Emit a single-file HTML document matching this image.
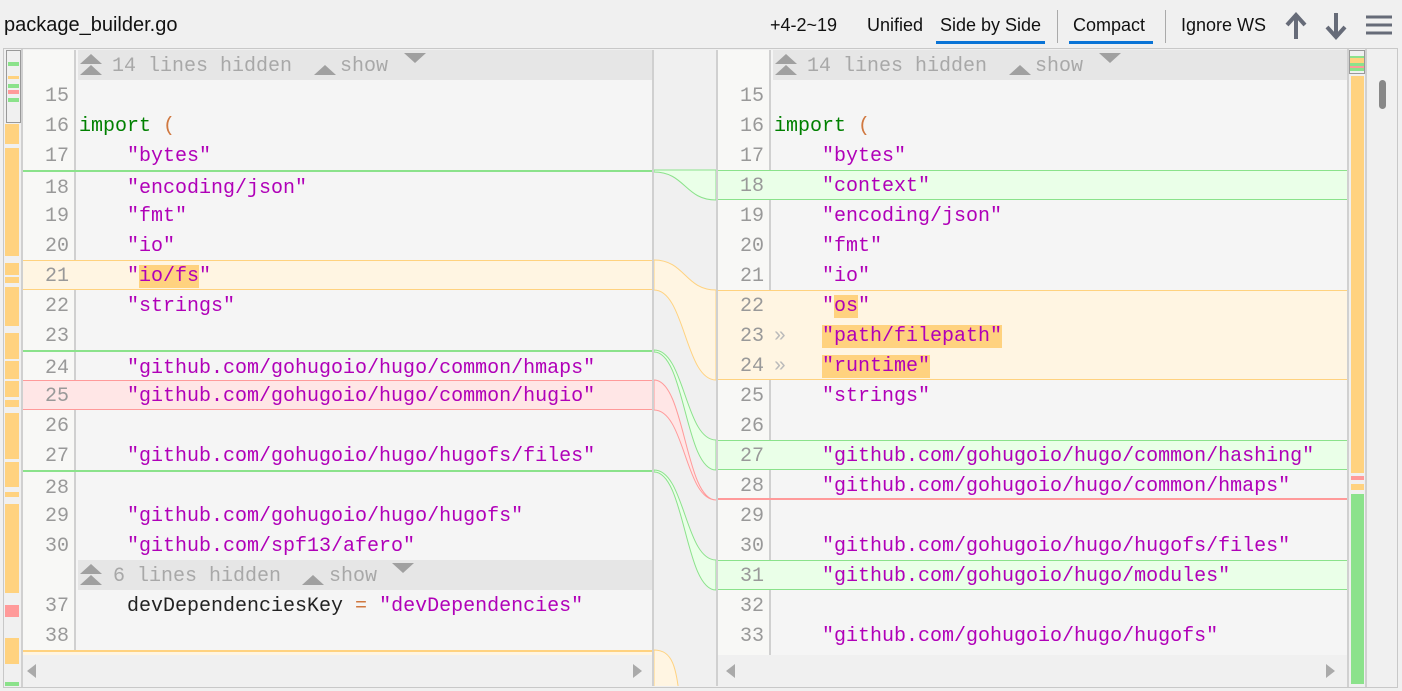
<!DOCTYPE html>
<html><head><meta charset="utf-8"><style>
*{margin:0;padding:0;box-sizing:border-box}
body{width:1402px;height:691px;background:#f0f0f0;position:relative;overflow:hidden;font-family:"Liberation Sans",sans-serif}
.top{position:absolute;font-size:18px;color:#111;top:15px}
.ul{position:absolute;top:41px;height:3px;background:#0a74d6}
.sep{position:absolute;top:10px;width:1px;height:33px;background:#aaa}
.frame{position:absolute;left:3px;top:48px;width:1395px;height:640px;border:1px solid #c8c8c8;background:#f0f0f0}
.panel{position:absolute;top:50px;height:636px;background:#f5f5f5;overflow:hidden;font-family:"Liberation Mono",monospace;font-size:20px}
.gut{position:absolute;top:0;bottom:31px;left:0;width:53px;background:#f8f8f6;border-right:2px solid #d0d0d0}
.r{position:absolute;left:0;right:0;height:30px;line-height:30px;white-space:pre}
.n{position:absolute;left:0;top:2px;width:46px;text-align:right;color:#999}
.c{position:absolute;left:56px;top:2px;color:#222}
.s{color:#b000b8}.k{color:#008000}.p{color:#d07840}
.hl{background:#ffd27f}
.hid{background:#e6e6e6;color:#a8a8a8;left:55px;padding-top:2px}
.gr{background:#eaffe8;border-top:1px solid #8be28b;border-bottom:1px solid #8be28b}
.ye{background:#fff5e2}
.re{background:#ffe6e6}
.hs{position:absolute;left:0;right:0;bottom:0;height:31px;background:#f0f0f0}
.tri{position:absolute;width:0;height:0;border-left:11px solid transparent;border-right:11px solid transparent}
.up{border-bottom:10px solid #a0a0a0}.dn{border-top:10px solid #a0a0a0}
.m{position:absolute;left:5px;width:14px}
.o{background:#ffd27f}
</style></head><body>
<div class="top" style="left:4px;font-size:20px;top:14px">package_builder.go</div>
<div class="top" style="left:770px">+4-2~19</div>
<div class="top" style="left:867px">Unified</div>
<div class="top" style="left:940px">Side by Side</div>
<div class="ul" style="left:936px;width:109px"></div>
<div class="sep" style="left:1057px"></div>
<div class="top" style="left:1073px">Compact</div>
<div class="ul" style="left:1069px;width:84px"></div>
<div class="sep" style="left:1165px"></div>
<div class="top" style="left:1181px">Ignore WS</div>
<svg style="position:absolute;left:1284px;top:12px" width="24" height="28"><path d="M12 27V5M3 13L12 3L21 13" stroke="#666b78" stroke-width="4" fill="none"/></svg>
<svg style="position:absolute;left:1324px;top:12px" width="24" height="28"><path d="M12 1V23M3 15L12 25L21 15" stroke="#666b78" stroke-width="4" fill="none"/></svg>
<svg style="position:absolute;left:1366px;top:14px" width="26" height="22"><path d="M0 3H26M0 11H26M0 19H26" stroke="#666b78" stroke-width="3"/></svg>

<div class="frame"></div>
<div style="position:absolute;left:4px;top:49px;width:19px;height:638px;background:#f0f0f0;border-right:2px solid #d0d0d0"></div>
<div class="m o" style="top:124px;height:20px"></div><div class="m o" style="top:148px;height:108px"></div>
<div class="m o" style="top:263px;height:12px"></div><div class="m o" style="top:277px;height:6px"></div>
<div class="m o" style="top:287px;height:39px"></div><div class="m o" style="top:333px;height:26px"></div>
<div class="m o" style="top:361px;height:18px"></div><div class="m o" style="top:381px;height:16px"></div>
<div class="m o" style="top:400px;height:7px"></div><div class="m o" style="top:413px;height:46px"></div>
<div class="m o" style="top:462px;height:25px"></div><div class="m o" style="top:492px;height:5px"></div>
<div class="m o" style="top:504px;height:89px"></div><div class="m" style="top:605px;height:12px;background:#ff9a9a"></div>
<div class="m o" style="top:638px;height:26px"></div><div class="m" style="top:682px;height:4px;background:#8be28b"></div>
<div style="position:absolute;left:6px;top:50px;width:15px;height:73px;border:1px solid #999;background:rgba(240,240,240,.6)"></div>
<div class="m" style="top:62px;height:4px;background:#8be28b;left:8px;width:11px"></div>
<div class="m" style="top:76px;height:3px;background:#ffd27f;left:8px;width:11px"></div>
<div class="m" style="top:84px;height:4px;background:#8be28b;left:8px;width:11px"></div>
<div class="m" style="top:90px;height:4px;background:#ff9a9a;left:8px;width:11px"></div>
<div class="m" style="top:98px;height:4px;background:#8be28b;left:8px;width:11px"></div>

<div class="panel" style="left:23px;width:631px;border-right:2px solid #d0d0d0">
<div class="gut"></div>
<div class="r hid" style="top:0">  <span style="margin-left:10px">14 lines hidden</span>    show
<div class="tri up" style="left:2px;top:4px"></div><div class="tri up" style="left:2px;top:15px"></div><div class="tri up" style="left:236px;top:15px"></div><div class="tri dn" style="left:326px;top:3px"></div></div>
<div class="r" style="top:30px"><span class="n">15</span></div>
<div class="r" style="top:60px"><span class="n">16</span><span class="c"><span class="k">import</span> <span class="p">(</span></span></div>
<div class="r" style="top:90px"><span class="n">17</span><span class="c">    <span class="s">"bytes"</span></span></div>
<div class="r" style="top:120px;border-top:2px solid #8be28b"><span class="n">18</span><span class="c">    <span class="s">"encoding/json"</span></span></div>
<div class="r" style="top:150px"><span class="n">19</span><span class="c">    <span class="s">"fmt"</span></span></div>
<div class="r" style="top:180px"><span class="n">20</span><span class="c">    <span class="s">"io"</span></span></div>
<div class="r ye" style="top:210px;border-top:1px solid #ffd27f;border-bottom:1px solid #ffd27f;line-height:28px"><span class="n">21</span><span class="c">    <span class="s">"<span class="hl">io/fs</span>"</span></span></div>
<div class="r" style="top:240px"><span class="n">22</span><span class="c">    <span class="s">"strings"</span></span></div>
<div class="r" style="top:270px"><span class="n">23</span></div>
<div class="r" style="top:300px;border-top:2px solid #8be28b"><span class="n">24</span><span class="c">    <span class="s">"github.com/gohugoio/hugo/common/hmaps"</span></span></div>
<div class="r re" style="top:330px;border-top:1px solid #ff9a9a;border-bottom:1px solid #ff9a9a;line-height:28px"><span class="n">25</span><span class="c">    <span class="s">"github.com/gohugoio/hugo/common/hugio"</span></span></div>
<div class="r" style="top:360px"><span class="n">26</span></div>
<div class="r" style="top:390px"><span class="n">27</span><span class="c">    <span class="s">"github.com/gohugoio/hugo/hugofs/files"</span></span></div>
<div class="r" style="top:420px;border-top:2px solid #8be28b"><span class="n">28</span></div>
<div class="r" style="top:450px"><span class="n">29</span><span class="c">    <span class="s">"github.com/gohugoio/hugo/hugofs"</span></span></div>
<div class="r" style="top:480px"><span class="n">30</span><span class="c">    <span class="s">"github.com/spf13/afero"</span></span></div>
<div class="r hid" style="top:510px"><span style="margin-left:35px">6 lines hidden</span>    show
<div class="tri up" style="left:2px;top:4px"></div><div class="tri up" style="left:2px;top:15px"></div><div class="tri up" style="left:224px;top:15px"></div><div class="tri dn" style="left:314px;top:3px"></div></div>
<div class="r" style="top:540px"><span class="n">37</span><span class="c">    devDependenciesKey <span class="p">=</span> <span class="s">"devDependencies"</span></span></div>
<div class="r" style="top:570px"><span class="n">38</span></div>
<div class="r ye" style="top:600px;border-top:2px solid #ffd27f"></div>
<div class="hs"><div class="tri" style="border:7px solid transparent;border-right:9px solid #aaa;left:4px;top:9px;border-left:0"></div><div class="tri" style="border:7px solid transparent;border-left:9px solid #aaa;left:610px;top:9px;border-right:0"></div></div>
</div>

<svg style="position:absolute;left:654px;top:0" width="62" height="686">
<path d="M0,170 C31,170 31,170 62,170 L62,200 C31,200 31,172 0,172 Z" fill="#eaffe8" stroke="#8be28b"/>
<path d="M0,260 C31,260 31,290 62,290 L62,380 C31,380 31,290 0,290 Z" fill="#fff5e2" stroke="#ffd27f"/>
<path d="M0,350 C31,350 31,440 62,440 L62,470 C31,470 31,352 0,352 Z" fill="#eaffe8" stroke="#8be28b"/>
<path d="M0,380 C31,380 31,500 62,500 C31,500 31,410 0,410 Z" fill="#ffe6e6" stroke="#ff9a9a"/>
<path d="M0,470 C31,470 31,560 62,560 L62,590 C31,590 31,472 0,472 Z" fill="#eaffe8" stroke="#8be28b"/>
<path d="M0,650 C20,650 22,670 26,700 L0,700 Z" fill="#fff5e2" stroke="#ffd27f"/>
</svg>

<div class="panel" style="left:716px;width:631px;border-left:2px solid #d0d0d0">
<div class="gut"></div>
<div class="r hid" style="top:0">  <span style="margin-left:10px">14 lines hidden</span>    show
<div class="tri up" style="left:2px;top:4px"></div><div class="tri up" style="left:2px;top:15px"></div><div class="tri up" style="left:236px;top:15px"></div><div class="tri dn" style="left:326px;top:3px"></div></div>
<div class="r" style="top:30px"><span class="n">15</span></div>
<div class="r" style="top:60px"><span class="n">16</span><span class="c"><span class="k">import</span> <span class="p">(</span></span></div>
<div class="r" style="top:90px"><span class="n">17</span><span class="c">    <span class="s">"bytes"</span></span></div>
<div class="r gr" style="top:120px;line-height:28px"><span class="n">18</span><span class="c">    <span class="s">"context"</span></span></div>
<div class="r" style="top:150px"><span class="n">19</span><span class="c">    <span class="s">"encoding/json"</span></span></div>
<div class="r" style="top:180px"><span class="n">20</span><span class="c">    <span class="s">"fmt"</span></span></div>
<div class="r" style="top:210px"><span class="n">21</span><span class="c">    <span class="s">"io"</span></span></div>
<div class="ye" style="position:absolute;left:0;right:0;top:240px;height:90px;border-top:1px solid #ffd27f;border-bottom:1px solid #ffd27f"></div>
<div class="r" style="top:240px"><span class="n">22</span><span class="c">    <span class="s">"<span class="hl">os</span>"</span></span></div>
<div class="r" style="top:270px"><span class="n">23</span><span class="c"><span style="color:#bbb">»</span>   <span class="s hl">"path/filepath"</span></span></div>
<div class="r" style="top:300px"><span class="n">24</span><span class="c"><span style="color:#bbb">»</span>   <span class="s hl">"runtime"</span></span></div>
<div class="r" style="top:330px"><span class="n">25</span><span class="c">    <span class="s">"strings"</span></span></div>
<div class="r" style="top:360px"><span class="n">26</span></div>
<div class="r gr" style="top:390px;line-height:28px"><span class="n">27</span><span class="c">    <span class="s">"github.com/gohugoio/hugo/common/hashing"</span></span></div>
<div class="r" style="top:420px;border-bottom:2px solid #ff9a9a"><span class="n">28</span><span class="c">    <span class="s">"github.com/gohugoio/hugo/common/hmaps"</span></span></div>
<div class="r" style="top:450px"><span class="n">29</span></div>
<div class="r" style="top:480px"><span class="n">30</span><span class="c">    <span class="s">"github.com/gohugoio/hugo/hugofs/files"</span></span></div>
<div class="r gr" style="top:510px;line-height:28px"><span class="n">31</span><span class="c">    <span class="s">"github.com/gohugoio/hugo/modules"</span></span></div>
<div class="r" style="top:540px"><span class="n">32</span></div>
<div class="r" style="top:570px"><span class="n">33</span><span class="c">    <span class="s">"github.com/gohugoio/hugo/hugofs"</span></span></div>
<div class="r" style="top:600px"><span class="n">34</span><span class="c">    <span class="s">"github.com/spf13/afero"</span></span></div>
<div class="hs"><div class="tri" style="border:7px solid transparent;border-right:9px solid #aaa;left:8px;top:9px;border-left:0"></div><div class="tri" style="border:7px solid transparent;border-left:9px solid #aaa;left:608px;top:9px;border-right:0"></div></div>
</div>

<div style="position:absolute;left:1347px;top:49px;width:20px;height:638px;background:#f0f0f0;border-left:2px solid #d0d0d0;border-right:2px solid #d0d0d0"></div>
<div style="position:absolute;left:1351px;top:76px;width:13px;height:397px;background:#ffd27f"></div>
<div style="position:absolute;left:1351px;top:476px;width:13px;height:4px;background:#ff9a9a"></div>
<div style="position:absolute;left:1351px;top:484px;width:13px;height:6px;background:#ffd27f"></div>
<div style="position:absolute;left:1351px;top:494px;width:13px;height:190px;background:#8be28b"></div>
<div style="position:absolute;left:1349px;top:50px;width:16px;height:24px;border:1px solid #999;background:linear-gradient(#f0f0f0 0 5px,#8be28b 5px 7px,#ffd27f 7px 12px,#8be28b 12px 15px,#ff9a9a 15px 17px,#8be28b 17px 20px,#f0f0f0 20px)"></div>
<div style="position:absolute;left:1379px;top:80px;width:7px;height:29px;border-radius:4px;background:#888"></div>
</body></html>
